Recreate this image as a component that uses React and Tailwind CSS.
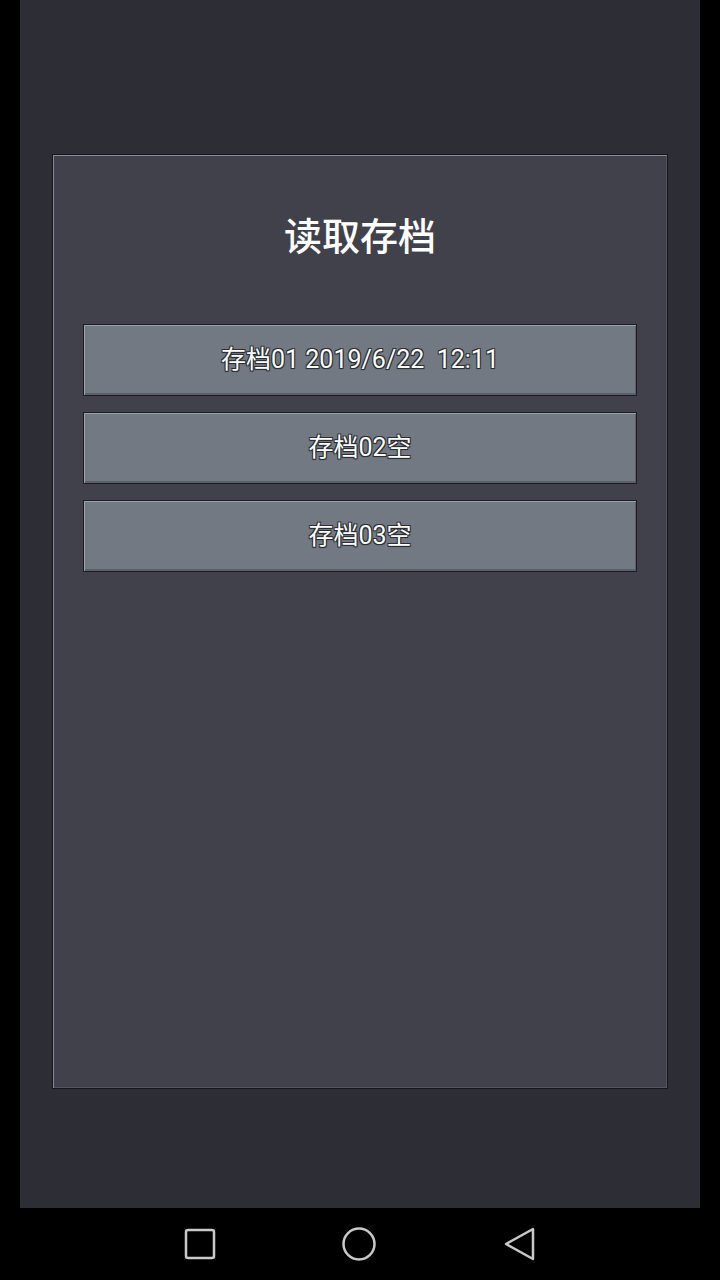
import React from "react";

const slots = [
  { id: 1, label: "存档01 2019/6/22  12:11" },
  { id: 2, label: "存档02空" },
  { id: 3, label: "存档03空" },
];

const SlotButton = ({ label }) => (
  <button
    className="h-[72px] w-full border border-[#1c1d22] bg-[#727982] shadow-[inset_1px_1px_0_#9ba1a8,inset_-1px_-2px_0_#5a6068] text-[25px] text-white whitespace-pre [text-shadow:-1px_-1px_0_#2b2d33,1px_-1px_0_#2b2d33,-1px_1px_0_#2b2d33,1px_1px_0_#2b2d33,0_1px_1px_#2b2d33]"
  >
    {label}
  </button>
);

export default function App() {
  return (
    <div className="flex h-[1280px] w-[720px] flex-col bg-black font-['Roboto','Noto_Sans_CJK_SC',sans-serif]">
      {/* screen area */}
      <div className="mx-[20px] flex h-[1208px] flex-col bg-[#2d2d35] pt-[154px]">
        <div className="mx-[32px] h-[935px] border border-[#15151b] bg-[#41414b] shadow-[inset_1px_1px_0_#8a8a94,inset_-1px_-1px_0_#55555f] px-[30px] pt-[63px]">
          <h1 className="text-center text-[38px] font-medium leading-none text-white">
            读取存档
          </h1>
          <div className="mt-[68px] flex flex-col gap-[16px]">
            {slots.map((s) => (
              <SlotButton key={s.id} label={s.label} />
            ))}
          </div>
        </div>
      </div>

      {/* android nav bar */}
      <div className="flex h-[72px] items-center justify-center gap-[125px]">
        <svg width="32" height="32" viewBox="0 0 32 32">
          <rect x="2" y="2" width="28" height="28" rx="2" fill="none" stroke="#c9c9c9" strokeWidth="2.5" />
        </svg>
        <svg width="36" height="36" viewBox="0 0 36 36">
          <circle cx="18" cy="18" r="15.5" fill="none" stroke="#c9c9c9" strokeWidth="2.5" />
        </svg>
        <svg width="34" height="34" viewBox="0 0 34 34">
          <path d="M31 2 L31 32 L4 17 Z" fill="none" stroke="#c9c9c9" strokeWidth="2.5" strokeLinejoin="round" />
        </svg>
      </div>
    </div>
  );
}
